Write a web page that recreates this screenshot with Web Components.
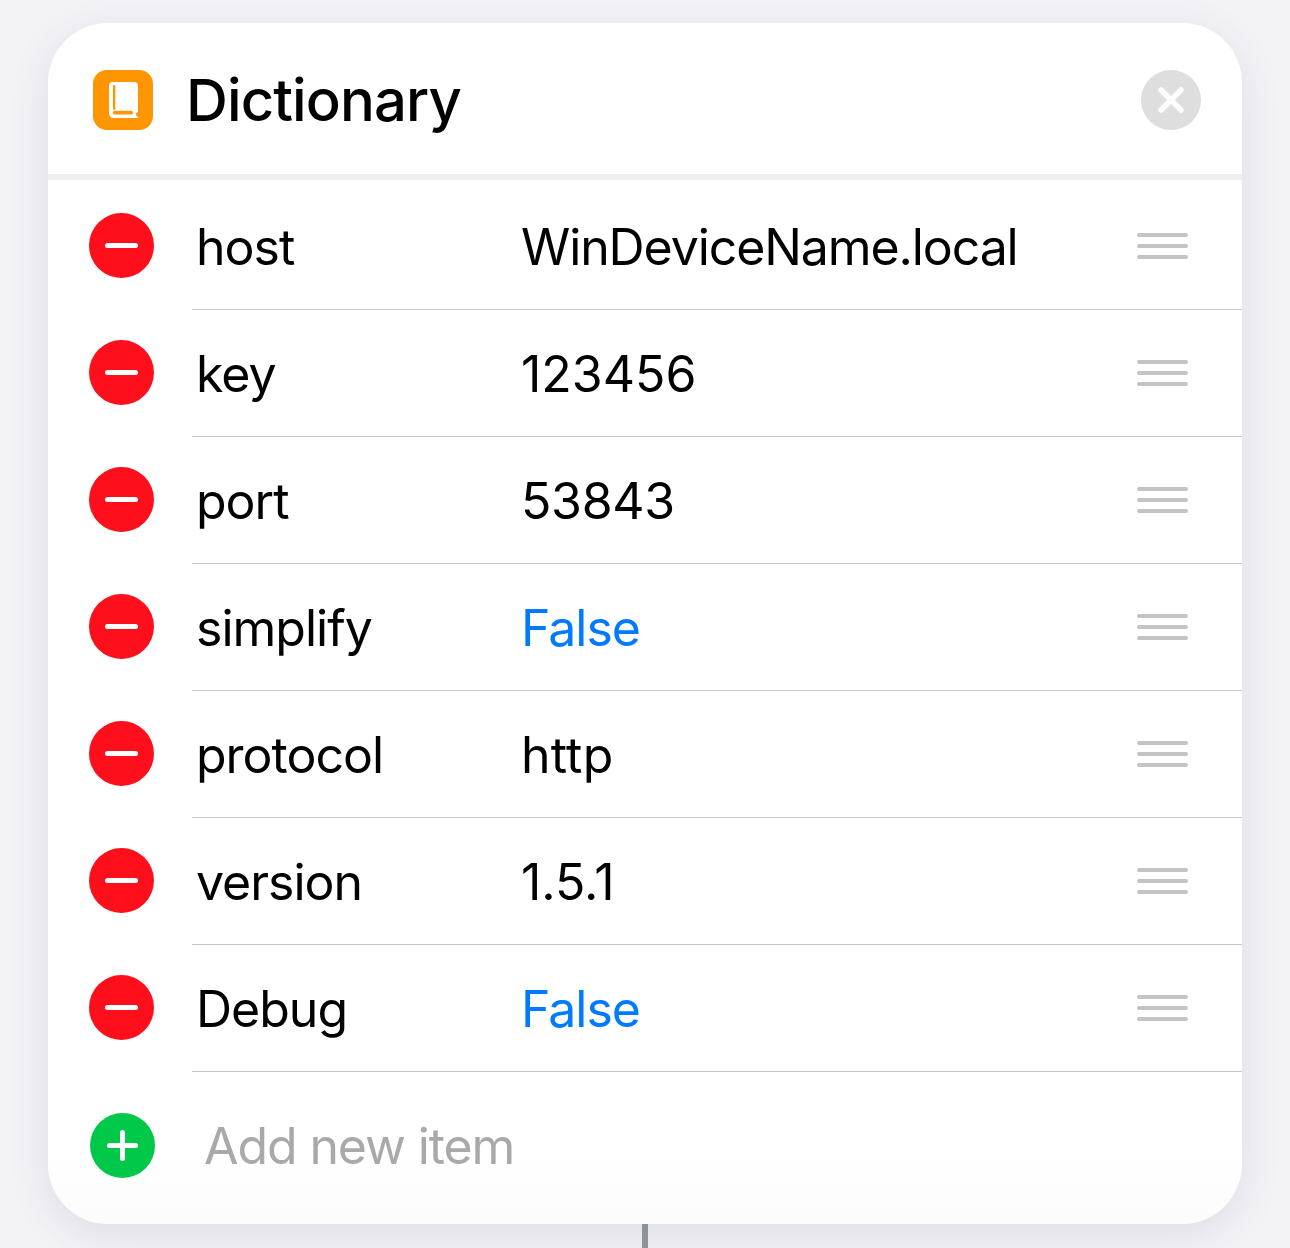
<!DOCTYPE html>
<html>
<head>
<meta charset="utf-8">
<title>Dictionary</title>
<style>
  html, body { margin: 0; height: 100%; }
  body {
    background: #f2f2f7;
    color: #000;
    font-family: Inter, "Liberation Sans", sans-serif;
    overflow: hidden;
  }
  #page {
    display: flex;
    flex-direction: column;
    align-items: center;
    height: 1248px;
    padding-top: 23px;
    box-sizing: border-box;
  }
</style>
</head>
<body>
<div id="page">
  <dict-card>
    <dict-header slot="header" title-text="Dictionary"></dict-header>
    <dict-row name="host" value="WinDeviceName.local" tracking="-1.1"></dict-row>
    <dict-row name="key" value="123456" tracking="0"></dict-row>
    <dict-row name="port" value="53843" tracking="-.3"></dict-row>
    <dict-row name="simplify" value="False" kind="bool"></dict-row>
    <dict-row name="protocol" value="http" tracking=".2"></dict-row>
    <dict-row name="version" value="1.5.1" tracking="0"></dict-row>
    <dict-row name="Debug" value="False" kind="bool"></dict-row>
    <dict-add slot="footer">Add new item</dict-add>
  </dict-card>
  <flow-connector></flow-connector>
</div>

<script>
class DictCard extends HTMLElement {
  constructor() {
    super();
    this.attachShadow({ mode: 'open' }).innerHTML = `
      <style>
        :host {
          display: flex;
          flex-direction: column;
          flex: none;
          width: 1194px;
          height: 1201px;
          background: linear-gradient(#fff 94%, #fcfcfc);
          border-radius: 60px;
          box-shadow: 0 10px 40px rgba(60, 60, 90, .11);
        }
        .list { padding-top: 2px; }
      </style>
      <slot name="header"></slot>
      <div class="list"><slot></slot></div>
      <slot name="footer"></slot>
    `;
  }
}

class DictHeader extends HTMLElement {
  constructor() {
    super();
    this.attachShadow({ mode: 'open' }).innerHTML = `
      <style>
        :host {
          display: flex;
          align-items: center;
          height: 149px;
          padding: 2px 41px 0 45px;
          border-bottom: 6px solid #eeeef0;
        }
        .app { width: 60px; height: 60px; flex: none; display: block; }
        h1 {
          flex: 1;
          margin: 0 0 0 33px;
          font-size: 58px;
          font-weight: 500;
          letter-spacing: -.9px;
          line-height: 1;
        }
        .close { width: 60px; height: 60px; flex: none; display: block; }
      </style>
      <svg class="app" viewBox="0 0 60 60">
        <rect width="60" height="60" rx="14" fill="#ff9500"/>
        <path fill="#fff" d="M19.500 12H41a4 4 0 0 1 4 4v25c0 .8-.4 1.200-1.200 1.800-1.200 1-1.200 2.200 0 3.200l1 .9c.5 .5 .2 1.100-.6 1.100H20.500a4.500 4.500 0 0 1-4.500-4.500V15.500a3.500 3.500 0 0 1 3.500-3.500z"/>
        <rect x="20" y="15" width="2.300" height="25" rx="1" fill="#ff9500"/>
        <rect x="20" y="40.800" width="20" height="3.700" rx="1.800" fill="#ff9500"/>
      </svg>
      <h1></h1>
      <svg class="close" viewBox="0 0 60 60">
        <circle cx="30" cy="30" r="30" fill="#dedede"/>
        <path d="M20 20l20 20M40 20L20 40" stroke="#fff" stroke-width="5.500" stroke-linecap="round" fill="none"/>
      </svg>
    `;
    this.shadowRoot.querySelector('h1').textContent = this.getAttribute('title-text');
  }
}

class DragHandle extends HTMLElement {
  constructor() {
    super();
    this.attachShadow({ mode: 'open' }).innerHTML = `
      <style>
        :host {
          display: flex;
          flex-direction: column;
          gap: 7px;
          width: 51px;
          flex: none;
        }
        i { display: block; height: 4px; border-radius: 2px; background: #c4c4c4; }
      </style>
      <i></i><i></i><i></i>
    `;
  }
}

class DictRow extends HTMLElement {
  constructor() {
    super();
    this.attachShadow({ mode: 'open' }).innerHTML = `
      <style>
        :host {
          display: block;
          font-size: 50px;
        }
        .row {
          display: flex;
          align-items: center;
          height: 127px;
          padding-left: 41px;
          padding-right: 54px;
          position: relative;
        }
        .row::after {
          content: '';
          position: absolute;
          left: 144px;
          right: 0;
          bottom: -1px;
          height: 1px;
          background: #c6c6c8;
        }
        .minus { width: 65px; height: 65px; flex: none; display: block; }
        .name { width: 325px; margin-left: 42px; flex: none; letter-spacing: -1px; padding-top: 2px; }
        .value { flex: 1; letter-spacing: -1px; padding-top: 2px; }
        .value.bool { color: #007aff; }
      </style>
      <div class="row">
        <svg class="minus" viewBox="0 0 65 65">
          <circle cx="32.500" cy="32.500" r="32.500" fill="#ff0f1c"/>
          <rect x="16" y="30" width="33" height="5" rx="2.500" fill="#fff"/>
        </svg>
        <span class="name"></span>
        <span class="value"></span>
        <drag-handle></drag-handle>
      </div>
    `;
    this.shadowRoot.querySelector('.name').textContent = this.getAttribute('name');
    const value = this.shadowRoot.querySelector('.value');
    value.textContent = this.getAttribute('value');
    if (this.getAttribute('kind') === 'bool') value.classList.add('bool');
    // -digits and "tt" run wider in the reference than the rest of the text:
    if (this.hasAttribute('tracking')) value.style.letterSpacing = this.getAttribute('tracking') + 'px';
  }
}

class DictAdd extends HTMLElement {
  constructor() {
    super();
    this.attachShadow({ mode: 'open' }).innerHTML = `
      <style>
        :host {
          display: flex;
          align-items: center;
          height: 150px;
          padding-left: 42px;
          font-size: 50px;
          color: #a9a9a9;
          letter-spacing: -1.1px;
        }
        svg { width: 65px; height: 65px; flex: none; display: block; margin-bottom: 2px; }
        span { margin-left: 49px; }
      </style>
      <svg viewBox="0 0 65 65">
        <circle cx="32.500" cy="32.500" r="32.500" fill="#00c94a"/>
        <rect x="17" y="30" width="31" height="5" rx="2.500" fill="#fff"/>
        <rect x="30" y="17" width="5" height="31" rx="2.500" fill="#fff"/>
      </svg>
      <span><slot></slot></span>
    `;
  }
}

class FlowConnector extends HTMLElement {
  constructor() {
    super();
    this.attachShadow({ mode: 'open' }).innerHTML = `
      <style>
        :host { display: block; width: 6px; flex: 1; background: #8e9299; }
      </style>
    `;
  }
}

customElements.define('dict-card', DictCard);
customElements.define('dict-header', DictHeader);
customElements.define('drag-handle', DragHandle);
customElements.define('dict-row', DictRow);
customElements.define('dict-add', DictAdd);
customElements.define('flow-connector', FlowConnector);
</script>
</body>
</html>
